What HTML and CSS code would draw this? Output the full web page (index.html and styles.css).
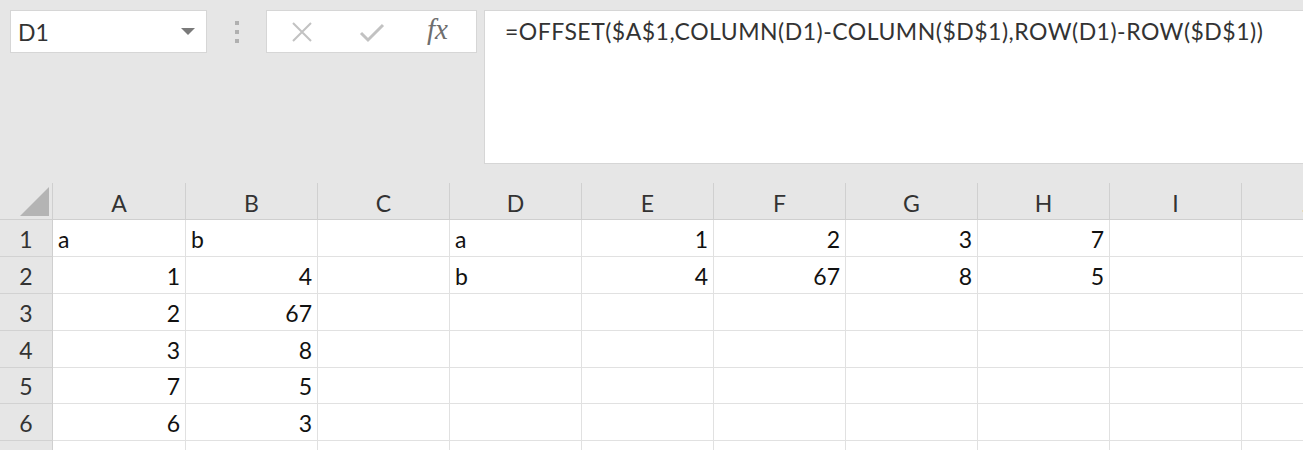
FILE: index.html
```html
<!DOCTYPE html>
<html>
<head>
<meta charset="utf-8">
<link rel="stylesheet" href="styles.css">
</head>
<body>
<div class="app">
  <div class="toolbar">
    <div class="namebox">
      <span class="name">D1</span>
      <svg class="caret" width="14" height="8" viewBox="0 0 14 8"><polygon points="0,0 14,0 7,7" fill="#7a7a7a"/></svg>
    </div>
    <div class="grip"><span></span><span></span><span></span></div>
    <div class="iconbox">
      <svg class="ico" width="24" height="24" viewBox="0 0 24 24"><path d="M3 3 L21 21 M21 3 L3 21" stroke="#c2c2c2" stroke-width="2" fill="none"/></svg>
      <svg class="ico" width="26" height="24" viewBox="0 0 26 24"><path d="M2 13 L9 20 L24 5" stroke="#c2c2c2" stroke-width="3" fill="none"/></svg>
      <span class="fx">fx</span>
    </div>
    <div class="formula">=OFFSET($A$1,COLUMN(D1)-COLUMN($D$1),ROW(D1)-ROW($D$1))</div>
  </div>
  <div class="sheet">
    <div class="corner"><div class="tri"></div></div>
    <div class="ch">A</div><div class="ch">B</div><div class="ch">C</div><div class="ch">D</div><div class="ch">E</div><div class="ch">F</div><div class="ch">G</div><div class="ch">H</div><div class="ch">I</div><div class="ch">J</div>

    <div class="rh">1</div>
    <div class="c">a</div><div class="c">b</div><div class="c"></div><div class="c">a</div><div class="c n">1</div><div class="c n">2</div><div class="c n">3</div><div class="c n">7</div><div class="c"></div><div class="c"></div>

    <div class="rh">2</div>
    <div class="c n">1</div><div class="c n">4</div><div class="c"></div><div class="c">b</div><div class="c n">4</div><div class="c n">67</div><div class="c n">8</div><div class="c n">5</div><div class="c"></div><div class="c"></div>

    <div class="rh">3</div>
    <div class="c n">2</div><div class="c n">67</div><div class="c"></div><div class="c"></div><div class="c"></div><div class="c"></div><div class="c"></div><div class="c"></div><div class="c"></div><div class="c"></div>

    <div class="rh">4</div>
    <div class="c n">3</div><div class="c n">8</div><div class="c"></div><div class="c"></div><div class="c"></div><div class="c"></div><div class="c"></div><div class="c"></div><div class="c"></div><div class="c"></div>

    <div class="rh">5</div>
    <div class="c n">7</div><div class="c n">5</div><div class="c"></div><div class="c"></div><div class="c"></div><div class="c"></div><div class="c"></div><div class="c"></div><div class="c"></div><div class="c"></div>

    <div class="rh">6</div>
    <div class="c n">6</div><div class="c n">3</div><div class="c"></div><div class="c"></div><div class="c"></div><div class="c"></div><div class="c"></div><div class="c"></div><div class="c"></div><div class="c"></div>

    <div class="rh"></div>
    <div class="c"></div><div class="c"></div><div class="c"></div><div class="c"></div><div class="c"></div><div class="c"></div><div class="c"></div><div class="c"></div><div class="c"></div><div class="c"></div>
  </div>
</div>
</body>
</html>
```
FILE: styles.css
```css
* { box-sizing: border-box; }
html, body { margin: 0; padding: 0; }
body { background: #e6e6e6; }
.app {
  width: 1303px;
  height: 450px;
  overflow: hidden;
  background: #e6e6e6;
  font-family: Lato, "Open Sans", sans-serif;
  color: #222;
}
.toolbar {
  height: 183px;
  display: flex;
  align-items: flex-start;
  padding-top: 10px;
  padding-left: 10px;
}
.namebox {
  width: 197px;
  height: 43px;
  background: #fff;
  border: 1px solid #d6d6d6;
  display: flex;
  align-items: center;
  justify-content: space-between;
  padding: 0 11px 0 7px;
}
.name { font-size: 23px; color: #333; margin-top: 1px; }
.caret { margin-top: 1px; }
.grip {
  width: 59px;
  height: 43px;
  display: flex;
  flex-direction: column;
  align-items: center;
  justify-content: center;
  gap: 5px;
}
.grip span { width: 4px; height: 4px; background: #b0b0b0; display: block; }
.iconbox {
  width: 211px;
  height: 43px;
  background: #fff;
  border: 1px solid #d6d6d6;
  display: flex;
  align-items: center;
  padding-left: 23px;
}
.iconbox .ico:first-child { margin-right: 45px; }
.iconbox .ico:nth-child(2) { margin-right: 42px; }
.fx {
  font-family: "Liberation Serif", "DejaVu Serif", serif;
  font-style: italic;
  font-size: 29px;
  color: #6e6e6e;
  margin-top: -4px;
}
.formula {
  margin-left: 7px;
  flex: 1;
  height: 154px;
  background: #fff;
  border: 1px solid #d6d6d6;
  border-right: none;
  padding: 6px 0 0 20px;
  font-size: 23px;
  letter-spacing: 0.5px;
  color: #333;
  white-space: nowrap;
}
.sheet {
  display: grid;
  grid-template-columns: 53px 133px repeat(8, 132px) 132px;
  grid-template-rows: 37px 37px 37px 37px 37px 36px 37px 37px;
}
.corner {
  border-right: 1px solid #cfcfcf;
  border-bottom: 1px solid #cfcfcf;
  position: relative;
}
.tri {
  position: absolute;
  right: 3px;
  bottom: 3px;
  width: 0;
  height: 0;
  border-left: 29px solid transparent;
  border-bottom: 29px solid #b4b4b4;
}
.ch {
  background: #e6e6e6;
  border-right: 1px solid #d0d0d0;
  border-bottom: 1px solid #cfcfcf;
  display: flex;
  align-items: center;
  justify-content: center;
  font-size: 23px;
  color: #333;
  padding-top: 4px;
}
.rh {
  background: #e6e6e6;
  border-right: 1px solid #cfcfcf;
  border-bottom: 1px solid #d2d2d2;
  display: flex;
  align-items: center;
  justify-content: center;
  font-size: 23px;
  color: #333;
  padding-top: 1px;
}
.c {
  background: #fff;
  border-right: 1px solid #e1e1e1;
  border-bottom: 1px solid #e1e1e1;
  display: flex;
  align-items: center;
  padding: 1px 5px 0 5px;
  font-size: 23px;
  color: #111;
}
.c.n { justify-content: flex-end; }
```
